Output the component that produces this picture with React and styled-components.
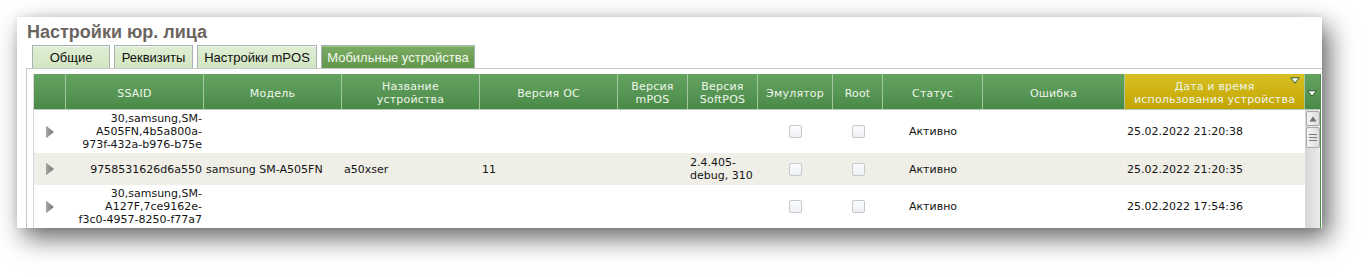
import React from 'react'
import styled, { createGlobalStyle } from 'styled-components'

const GlobalStyle = createGlobalStyle`
  html, body {
    margin: 0;
    padding: 0;
    background: #ffffff;
  }
`

const Page = styled.div`
  padding: 17px 0 49px 17px;
  min-height: 277px;
  box-sizing: border-box;
`

const Window = styled.div`
  width: 1305px;
  height: 211px;
  overflow: hidden;
  background: #ffffff;
  box-shadow: 7px 10px 24px rgba(0, 0, 0, 0.6), 0 0 8px rgba(0, 0, 0, 0.08);
`

const Title = styled.h1`
  margin: 0;
  padding: 5px 0 0 10px;
  font-family: "Liberation Sans", Arial, sans-serif;
  font-size: 18px;
  line-height: 20px;
  font-weight: 700;
  color: #6b6560;
`

const TabBar = styled.div`
  display: flex;
  gap: 4px;
  margin-top: 3px;
  padding-left: 15px;
`

const Tab = styled.div`
  box-sizing: border-box;
  width: ${p => p.$w}px;
  height: 23px;
  display: flex;
  align-items: center;
  justify-content: center;
  border: 1px solid #a7b0b6;
  border-bottom: none;
  font-family: "Liberation Sans", Arial, sans-serif;
  font-size: 13px;
  color: ${p => (p.$active ? '#f3f8ee' : '#111111')};
  background: ${p =>
    p.$active
      ? 'linear-gradient(#7aab63, #62974b)'
      : 'linear-gradient(#dfeed4, #d2e5c1)'};
  box-shadow: inset 0 1px 0 ${p => (p.$active ? '#9cc486' : '#f4faef')};
`

const Panel = styled.div`
  margin-left: 9px;
  border: 1px solid #c9c9c9;
  border-right: none;
  border-bottom: none;
  padding: 5px 0 0 6px;
`

const Grid = styled.div`
  width: 1286px;
  border-right: 1px solid #4c8b4a;
  border-left: 1px solid #d6d6d6;
  font-family: "DejaVu Sans", Verdana, sans-serif;
  font-size: 11px;
  line-height: 13px;
`

const cols = '32px 138px 138px 138px 138px 70px 70px 75px 50px 100px 142px 180px'

const HeadRow = styled.div`
  display: grid;
  grid-template-columns: ${cols} 15px;
  height: 35px;
  background: linear-gradient(#65a361, #4a8a48);
  border-bottom: 1px solid #b9cdb9;
`

const HeadCell = styled.div`
  position: relative;
  display: flex;
  align-items: center;
  justify-content: center;
  text-align: center;
  padding-top: 3px;
  box-sizing: border-box;
  color: #eef5ea;
  letter-spacing: 0.2px;
  border-right: 1px solid ${p => (p.$last ? 'transparent' : '#a3c6a1')};
  background: ${p => (p.$sorted ? 'linear-gradient(#d8c024, #c3a500)' : 'transparent')};
  white-space: pre-line;
`

const SortMark = styled.span`
  position: absolute;
  top: 3px;
  right: 4px;
  line-height: 0;
`

const Body = styled.div`
  display: flex;
`

const Rows = styled.div`
  width: 1271px;
`

const Row = styled.div`
  display: grid;
  grid-template-columns: ${cols};
  height: ${p => p.$h}px;
  background: ${p => (p.$alt ? '#efeee7' : '#ffffff')};
`

const Cell = styled.div`
  display: flex;
  align-items: center;
  justify-content: ${p =>
    p.$align === 'right' ? 'flex-end' : p.$align === 'center' ? 'center' : 'flex-start'};
  text-align: ${p => p.$align || 'left'};
  padding: 0 2px;
  color: #141414;
  white-space: pre-line;
  overflow: hidden;
`

const Checkbox = styled.span`
  box-sizing: border-box;
  width: 13px;
  height: 13px;
  border: 1px solid #c5c9ce;
  border-radius: 2px;
  background: linear-gradient(#fbfcfd, #eef0f3);
`

const Scrollbar = styled.div`
  width: 15px;
  display: flex;
  flex-direction: column;
  align-items: center;
  padding-top: 1px;
  gap: 1px;
  background: linear-gradient(90deg, #d6d6d6, #ececec);
`

const ScrollButton = styled.div`
  box-sizing: border-box;
  width: 14px;
  height: ${p => p.$h}px;
  display: flex;
  align-items: center;
  justify-content: center;
  border: 1px solid #a9a9a9;
  border-radius: 2px;
  background: linear-gradient(90deg, #f4f4f4, #dcdcdc);
`

const Expander = () => (
  <svg width="8" height="12" viewBox="0 0 8 12">
    <defs>
      <linearGradient id="exp" x1="0" y1="0" x2="1" y2="0">
        <stop offset="0" stopColor="#a9a9a9" />
        <stop offset="1" stopColor="#6f6f6f" />
      </linearGradient>
    </defs>
    <polygon points="0.5,0.5 7.5,6 0.5,11.5" fill="url(#exp)" stroke="#7d7d7d" strokeWidth="0.6" />
  </svg>
)

const DownMark = () => (
  <svg width="10" height="7" viewBox="0 0 10 7">
    <polygon points="0.8,0.8 9.2,0.8 5,6.2" fill="#ffffff" stroke="#2f5f2c" strokeWidth="1" />
  </svg>
)

const headers = [
  '',
  'SSAID',
  'Модель',
  'Название\nустройства',
  'Версия ОС',
  'Версия\nmPOS',
  'Версия\nSoftPOS',
  'Эмулятор',
  'Root',
  'Статус',
  'Ошибка',
  'Дата и время\nиспользования устройства',
]

const devices = [
  {
    h: 43,
    ssaid: '30,samsung,SM-\nA505FN,4b5a800a-\n973f-432a-b976-b75e',
    model: '',
    name: '',
    os: '',
    mpos: '',
    softpos: '',
    status: 'Активно',
    error: '',
    date: '25.02.2022 21:20:38',
  },
  {
    h: 32,
    alt: true,
    ssaid: '9758531626d6a550',
    model: 'samsung SM-A505FN',
    name: 'a50xser',
    os: '11',
    mpos: '',
    softpos: '2.4.405-\ndebug, 310',
    status: 'Активно',
    error: '',
    date: '25.02.2022 21:20:35',
  },
  {
    h: 43,
    ssaid: '30,samsung,SM-\nA127F,7ce9162e-\nf3c0-4957-8250-f77a7',
    model: '',
    name: '',
    os: '',
    mpos: '',
    softpos: '',
    status: 'Активно',
    error: '',
    date: '25.02.2022 17:54:36',
  },
]

const tabs = [
  { label: 'Общие', w: 78 },
  { label: 'Реквизиты', w: 79 },
  { label: 'Настройки mPOS', w: 120 },
  { label: 'Мобильные устройства', w: 154, active: true },
]

export default function App() {
  return (
    <Page>
      <GlobalStyle />
      <Window>
        <Title>Настройки юр. лица</Title>
        <TabBar>
          {tabs.map(t => (
            <Tab key={t.label} $w={t.w} $active={t.active}>
              {t.label}
            </Tab>
          ))}
        </TabBar>
        <Panel>
          <Grid>
            <HeadRow>
              {headers.map((h, i) => (
                <HeadCell key={i} $sorted={i === headers.length - 1}>
                  {h}
                  {i === headers.length - 1 && (
                    <SortMark>
                      <DownMark />
                    </SortMark>
                  )}
                </HeadCell>
              ))}
              <HeadCell $last>
                <DownMark />
              </HeadCell>
            </HeadRow>
            <Body>
              <Rows>
                {devices.map((d, i) => (
                  <Row key={i} $h={d.h} $alt={d.alt}>
                    <Cell $align="center">
                      <Expander />
                    </Cell>
                    <Cell $align="right">{d.ssaid}</Cell>
                    <Cell>{d.model}</Cell>
                    <Cell>{d.name}</Cell>
                    <Cell>{d.os}</Cell>
                    <Cell>{d.mpos}</Cell>
                    <Cell>{d.softpos}</Cell>
                    <Cell $align="center">
                      <Checkbox />
                    </Cell>
                    <Cell $align="center">
                      <Checkbox />
                    </Cell>
                    <Cell $align="center">{d.status}</Cell>
                    <Cell>{d.error}</Cell>
                    <Cell>{d.date}</Cell>
                  </Row>
                ))}
              </Rows>
              <Scrollbar>
                <ScrollButton $h={15}>
                  <svg width="8" height="6" viewBox="0 0 8 6">
                    <polygon points="4,0.5 7.5,5.5 0.5,5.5" fill="#6e6e6e" />
                  </svg>
                </ScrollButton>
                <ScrollButton $h={21}>
                  <svg width="8" height="7" viewBox="0 0 8 7">
                    <rect x="0" y="0" width="8" height="1" fill="#7a7a7a" />
                    <rect x="0" y="3" width="8" height="1" fill="#7a7a7a" />
                    <rect x="0" y="6" width="8" height="1" fill="#7a7a7a" />
                  </svg>
                </ScrollButton>
              </Scrollbar>
            </Body>
          </Grid>
        </Panel>
      </Window>
    </Page>
  )
}
